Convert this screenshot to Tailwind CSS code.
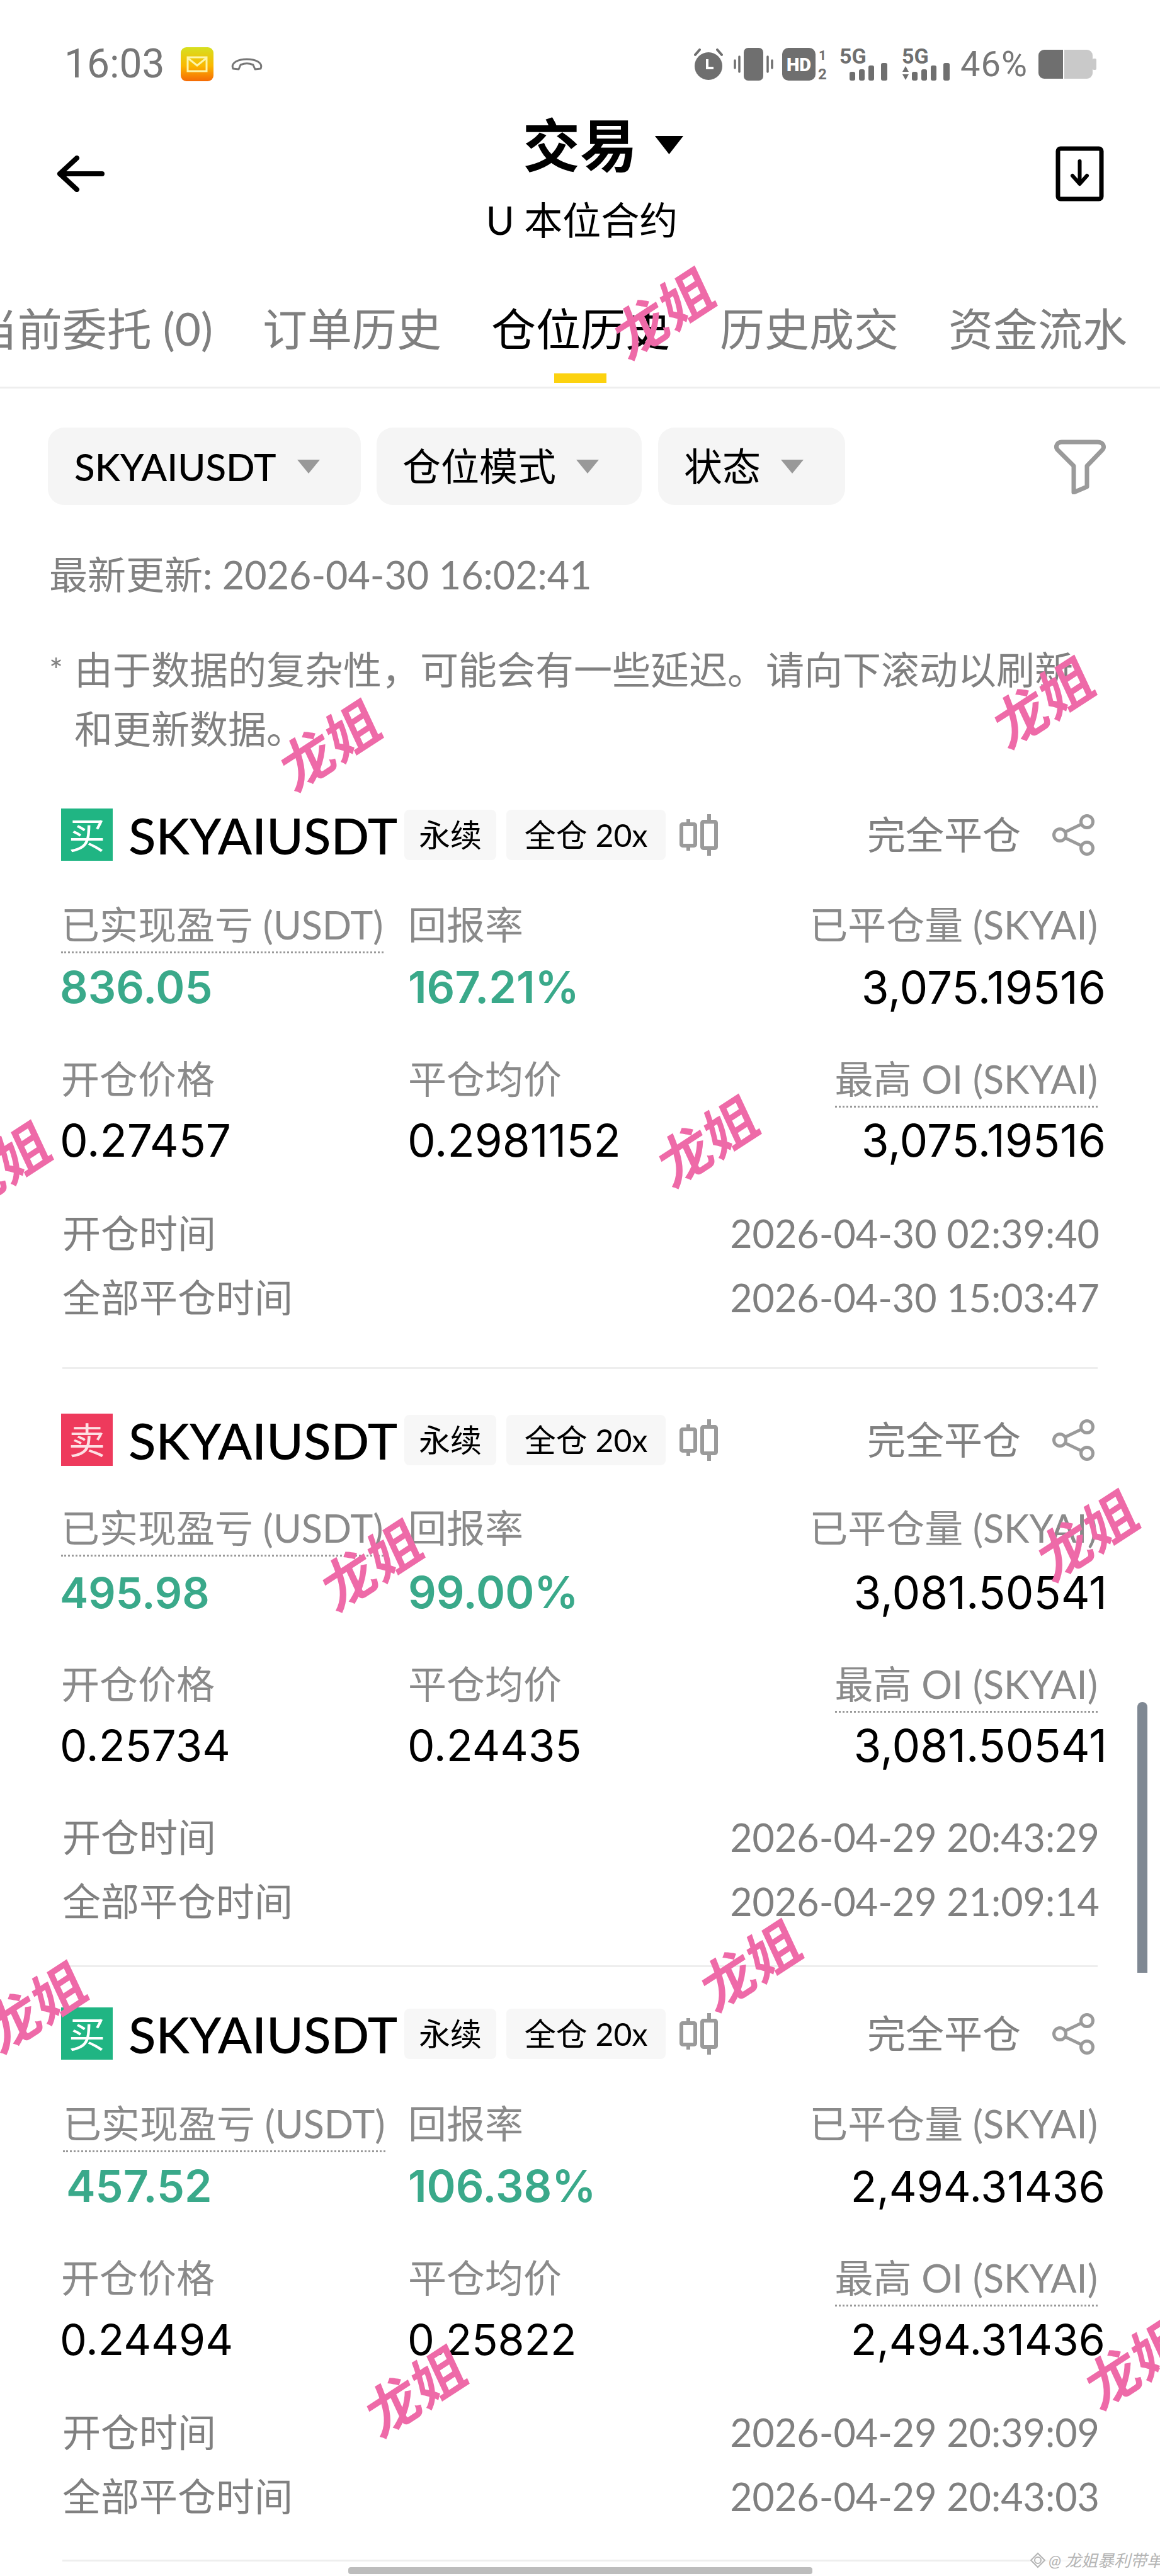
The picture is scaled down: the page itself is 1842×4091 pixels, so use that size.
<!DOCTYPE html>
<html lang="zh-CN">
<head>
    <meta charset="UTF-8">
    <meta name="viewport" content="width=device-width, initial-scale=1.0">
    <title>仓位历史</title>
    <script src="https://cdn.jsdelivr.net/npm/@tailwindcss/browser@4"></script>
</head>
<body class="bg-white">
<div class="relative w-[1842px] h-[4091px] overflow-hidden bg-white text-black font-['Lato','Noto_Sans_CJK_SC',sans-serif]">

    <!-- Status bar -->
    <div class="mt-[72px] h-[60px] flex items-center text-[#777777]">
        <span class="ml-[102px] w-[160px] text-[64px] leading-[60px] font-['Roboto',sans-serif]">16:03</span>
        <svg class="ml-[25px]" width="52" height="54" viewBox="0 0 52 54">
            <defs><linearGradient id="mail" x1="0" y1="0" x2="0" y2="1"><stop offset="0" stop-color="#d6e020"/><stop offset="0.55" stop-color="#fbb800"/><stop offset="1" stop-color="#f56a05"/></linearGradient></defs>
            <rect width="52" height="54" rx="9" fill="url(#mail)"/>
            <rect x="11" y="16" width="30" height="22" fill="none" stroke="#fdf5a8" stroke-width="3"/>
            <path d="M11 17 L26 29 L41 17" fill="none" stroke="#fdf5a8" stroke-width="3"/>
        </svg>
        <svg class="ml-[28px]" width="50" height="22" viewBox="0 0 50 22">
            <path d="M3 18 C-1 8 12 3 25 3 C38 3 51 8 47 18 L38 19 L35 12 C28 9 22 9 15 12 L12 19 Z" fill="none" stroke="#777777" stroke-width="3" stroke-linejoin="round"/>
        </svg>
        <svg class="ml-[684px]" width="48" height="50" viewBox="0 0 48 50">
            <circle cx="24" cy="28" r="22" fill="#6f6f6f"/>
            <path d="M22 17 V31 H32" fill="none" stroke="#fff" stroke-width="4"/>
            <path d="M3 10 L10 2 M45 10 L38 2" stroke="#6f6f6f" stroke-width="4" stroke-linecap="round"/>
        </svg>
        <svg class="ml-[16px]" width="63" height="52" viewBox="0 0 63 52">
            <rect x="16" y="0" width="31" height="52" rx="7" fill="#6f6f6f"/>
            <path d="M9 14 V38 M2 20 V32 M54 14 V38 M61 20 V32" stroke="#6f6f6f" stroke-width="3.5" stroke-linecap="round"/>
        </svg>
        <svg class="ml-[14px] overflow-visible" width="74" height="52" viewBox="0 0 74 52">
            <rect width="53" height="52" rx="10" fill="#6f6f6f"/>
            <text x="26.5" y="37" text-anchor="middle" font-family="Roboto" font-weight="900" font-size="29" fill="#fff">HD</text>
            <text x="64" y="19" text-anchor="middle" font-family="Roboto" font-weight="700" font-size="21" fill="#6f6f6f">1</text>
            <text x="64" y="50" text-anchor="middle" font-family="Roboto" font-weight="700" font-size="24" fill="#6f6f6f">2</text>
        </svg>
        <svg class="ml-[17px] overflow-visible" width="78" height="52" viewBox="0 0 78 52">
            <text x="0" y="25" font-family="Roboto" font-weight="700" font-size="34" fill="#6f6f6f">5G</text>
            <rect x="16" y="38" width="9" height="14" rx="3" fill="#6f6f6f"/>
            <rect x="31" y="34" width="9" height="18" rx="3" fill="#6f6f6f"/>
            <rect x="46" y="28" width="9" height="24" rx="3" fill="#6f6f6f"/>
            <rect x="66" y="24" width="10" height="28" rx="3" fill="#6f6f6f"/>
        </svg>
        <svg class="ml-[21px] overflow-visible" width="78" height="52" viewBox="0 0 78 52">
            <text x="0" y="25" font-family="Roboto" font-weight="700" font-size="34" fill="#6f6f6f">5G</text>
            <path d="M1 38 L6 29 L11 38 Z M1 42 H11 L6 51 Z" fill="#6f6f6f"/>
            <rect x="16" y="38" width="9" height="14" rx="3" fill="#6f6f6f"/>
            <rect x="31" y="34" width="9" height="18" rx="3" fill="#6f6f6f"/>
            <rect x="46" y="28" width="9" height="24" rx="3" fill="#6f6f6f"/>
            <rect x="66" y="24" width="10" height="28" rx="3" fill="#6f6f6f"/>
        </svg>
        <span class="ml-[15px] text-[56px] leading-[60px] font-['Roboto',sans-serif] tracking-[1px]">46%</span>
        <svg class="ml-[17px]" width="92" height="46" viewBox="0 0 92 46">
            <path d="M9 0 H39 V46 H9 A9 9 0 0 1 0 37 V9 A9 9 0 0 1 9 0 Z" fill="#6f6f6f"/>
            <path d="M41 0 H77 A9 9 0 0 1 86 9 V37 A9 9 0 0 1 77 46 H41 Z" fill="#c9c9c9"/>
            <rect x="86" y="14" width="6" height="18" rx="2" fill="#c9c9c9"/>
        </svg>
    </div>

    <!-- Title -->
    <div class="mt-[43px] grid grid-cols-[1fr_auto_1fr]">
        <svg class="ml-[90px] mt-[72px]" width="76" height="58" viewBox="0 0 76 58">
            <path d="M32 4 L5 29 L32 54 M5 29 H72" fill="none" stroke="#000" stroke-width="8" stroke-linecap="round" stroke-linejoin="round"/>
        </svg>
        <div class="flex flex-col items-center">
            <div class="relative h-[110px] text-[91px] leading-[110px] font-bold">
                交易
                <svg class="absolute left-[210px] top-[41px]" width="45" height="29" viewBox="0 0 45 29"><path d="M0 0 H45 L22.5 29 Z" fill="#000"/></svg>
            </div>
            <div class="mt-[25px] h-[80px] text-[61px] leading-[80px] ml-[6px]">U 本位合约</div>
        </div>
        <svg class="ml-auto mr-[89px] mt-[57px]" width="77" height="88" viewBox="0 0 77 88">
            <rect x="4" y="4" width="69" height="80" rx="4" fill="none" stroke="#000" stroke-width="7"/>
            <path d="M38.5 24 V58 M27 47 L38.5 60 L50 47" fill="none" stroke="#000" stroke-width="6" stroke-linecap="round" stroke-linejoin="round"/>
        </svg>
    </div>

    <!-- Tabs -->
    <div class="mt-[87px] h-[140px] border-b-[3px] border-[#eeeeee] flex justify-end gap-[79px] pr-[52px] text-[71px] leading-[90px] text-[#7f7f7f] whitespace-nowrap overflow-hidden">
        <span class="shrink-0">当前委托 (0)</span>
        <span class="shrink-0">订单历史</span>
        <span class="relative shrink-0 h-[134px] text-black">仓位历史<span class="absolute left-[100px] bottom-[3px] w-[83px] h-[15px] bg-[#fcd20f]"></span></span>
        <span class="shrink-0">历史成交</span>
        <span class="shrink-0">资金流水</span>
    </div>

    <!-- Filters -->
    <div class="mt-[62px] ml-[76px] flex items-center">
        <div class="w-[497px] h-[123px] rounded-[26px] bg-[#f5f5f5] flex items-center pl-[42px] text-[60px] font-medium">
            <span class="w-[320px]">SKYAIUSDT</span>
            <svg class="ml-[34px]" width="36" height="22" viewBox="0 0 36 22"><path d="M0 0 H36 L18 22 Z" fill="#999999"/></svg>
        </div>
        <div class="ml-[25px] w-[421px] h-[123px] rounded-[26px] bg-[#f5f5f5] flex items-center pl-[41px]">
            <span class="text-[61px]">仓位模式</span>
            <svg class="ml-[32px]" width="36" height="22" viewBox="0 0 36 22"><path d="M0 0 H36 L18 22 Z" fill="#999999"/></svg>
        </div>
        <div class="ml-[26px] w-[297px] h-[123px] rounded-[26px] bg-[#f5f5f5] flex items-center pl-[41px]">
            <span class="text-[61px]">状态</span>
            <svg class="ml-[32px]" width="36" height="22" viewBox="0 0 36 22"><path d="M0 0 H36 L18 22 Z" fill="#999999"/></svg>
        </div>
        <svg class="ml-[331px]" width="84" height="88" viewBox="0 0 84 88">
            <path d="M13 5 H70 C79 5 82 13 77 18 L53 43 V76 L32 85 V43 L7 18 C2 13 5 5 13 5 Z" fill="none" stroke="#9a9a9a" stroke-width="7" stroke-linejoin="round"/>
        </svg>
    </div>

    <!-- Notes -->
    <div class="mt-[71px] ml-[78px] h-[80px] text-[61px] leading-[80px] text-[#808080]">最新更新: 2026-04-30 16:02:41</div>
    <div class="mt-[64px] ml-[78px] text-[61px] leading-[94px] text-[#808080] flex">
        <span class="w-[40px] text-[52px]">*</span>
        <p>由于数据的复杂性，可能会有一些延迟。请向下滚动以刷新<br>和更新数据。</p>
    </div>

    <!-- Card 1 -->
    <section class="mt-[79px] mx-[99px]">
        <div class="h-[83px] flex items-center">
            <span class="-ml-[2px] w-[82px] h-[83px] bg-[#20b583] text-white text-[58px] leading-[83px] text-center shrink-0">买</span>
            <span class="ml-[25px] w-[422px] text-[80px] font-medium whitespace-nowrap">SKYAIUSDT</span>
            <span class="ml-[16px] w-[146px] h-[80px] rounded-[8px] bg-[#f7f7f7] text-[50px] leading-[80px] text-center">永续</span>
            <span class="ml-[16px] w-[253px] h-[80px] rounded-[8px] bg-[#f7f7f7] text-[50px] leading-[80px] text-center">全仓 20x</span>
            <svg class="ml-[22px]" width="62" height="66" viewBox="0 0 62 66"><path d="M14 8 V58 M47 0 V66" stroke="#9a9a9a" stroke-width="6"/><rect x="3" y="16" width="22" height="34" rx="2" fill="#fff" stroke="#9a9a9a" stroke-width="6"/><rect x="36" y="12" width="22" height="42" rx="2" fill="#fff" stroke="#9a9a9a" stroke-width="6"/></svg>
            <span class="ml-auto text-[61px] text-[#808080]">完全平仓</span>
            <svg class="ml-[50px] mr-[4px] shrink-0" width="68" height="66" viewBox="0 0 68 66"><circle cx="12" cy="33" r="9.5" fill="none" stroke="#9a9a9a" stroke-width="5"/><circle cx="55" cy="12" r="9.5" fill="none" stroke="#9a9a9a" stroke-width="5"/><circle cx="55" cy="54" r="9.5" fill="none" stroke="#9a9a9a" stroke-width="5"/><path d="M21 28 L46 16 M21 38 L46 50" stroke="#9a9a9a" stroke-width="5"/></svg>
        </div>
        <div class="mt-[67px] grid grid-cols-[549px_1fr_auto] text-[61px] leading-[70px] text-[#8a8a8a]">
            <span><span class="inline-block -ml-[2px] h-[80px] border-b-[3px] border-dotted border-[#999999]">已实现盈亏 (USDT)</span></span>
            <span>回报率</span>
            <span class="text-right">已平仓量 (SKYAI)</span>
        </div>
        <div class="mt-[14px] grid grid-cols-[549px_1fr_auto] h-[80px] text-[71px] leading-[80px] font-['Inter',sans-serif]">
            <span class="-ml-[4px] text-[70px] font-semibold text-[#3aa98a]">836.05</span>
            <span class="text-[70px] font-semibold text-[#3aa98a]">167.21%</span>
            <span class="text-right -mr-[13px]">3,075.19516</span>
        </div>
        <div class="mt-[71px] grid grid-cols-[549px_1fr_auto] text-[61px] leading-[70px] text-[#8a8a8a]">
            <span class="-ml-[2px]">开仓价格</span>
            <span>平仓均价</span>
            <span class="text-right"><span class="inline-block h-[80px] border-b-[3px] border-dotted border-[#999999]">最高 OI (SKYAI)</span></span>
        </div>
        <div class="mt-[12px] grid grid-cols-[549px_1fr_auto] h-[80px] text-[71px] leading-[80px] font-['Inter',sans-serif]">
            <span class="-ml-[4px]">0.27457</span>
            <span class="-ml-[1px]">0.2981152</span>
            <span class="text-right -mr-[13px]">3,075.19516</span>
        </div>
        <div class="mt-[73px] flex justify-between text-[61px] leading-[70px] text-[#808080]">
            <span>开仓时间</span>
            <span class="-mr-[3px]">2026-04-30 02:39:40</span>
        </div>
        <div class="mt-[32px] flex justify-between text-[61px] leading-[70px] text-[#808080]">
            <span>全部平仓时间</span>
            <span class="-mr-[3px]">2026-04-30 15:03:47</span>
        </div>
        <div class="mt-[75px] h-[3px] bg-[#eeeeee]"></div>
    </section>

    <!-- Card 2 -->
    <section class="mt-[71px] mx-[99px]">
        <div class="h-[83px] flex items-center">
            <span class="-ml-[2px] w-[82px] h-[83px] bg-[#ee3a5c] text-[#fde0e4] text-[58px] leading-[83px] text-center shrink-0">卖</span>
            <span class="ml-[25px] w-[422px] text-[80px] font-medium whitespace-nowrap">SKYAIUSDT</span>
            <span class="ml-[16px] w-[146px] h-[80px] rounded-[8px] bg-[#f7f7f7] text-[50px] leading-[80px] text-center">永续</span>
            <span class="ml-[16px] w-[253px] h-[80px] rounded-[8px] bg-[#f7f7f7] text-[50px] leading-[80px] text-center">全仓 20x</span>
            <svg class="ml-[22px]" width="62" height="66" viewBox="0 0 62 66"><path d="M14 8 V58 M47 0 V66" stroke="#9a9a9a" stroke-width="6"/><rect x="3" y="16" width="22" height="34" rx="2" fill="#fff" stroke="#9a9a9a" stroke-width="6"/><rect x="36" y="12" width="22" height="42" rx="2" fill="#fff" stroke="#9a9a9a" stroke-width="6"/></svg>
            <span class="ml-auto text-[61px] text-[#808080]">完全平仓</span>
            <svg class="ml-[50px] mr-[4px] shrink-0" width="68" height="66" viewBox="0 0 68 66"><circle cx="12" cy="33" r="9.5" fill="none" stroke="#9a9a9a" stroke-width="5"/><circle cx="55" cy="12" r="9.5" fill="none" stroke="#9a9a9a" stroke-width="5"/><circle cx="55" cy="54" r="9.5" fill="none" stroke="#9a9a9a" stroke-width="5"/><path d="M21 28 L46 16 M21 38 L46 50" stroke="#9a9a9a" stroke-width="5"/></svg>
        </div>
        <div class="mt-[64px] grid grid-cols-[549px_1fr_auto] text-[61px] leading-[70px] text-[#8a8a8a]">
            <span><span class="inline-block -ml-[2px] h-[80px] border-b-[3px] border-dotted border-[#999999]">已实现盈亏 (USDT)</span></span>
            <span>回报率</span>
            <span class="text-right">已平仓量 (SKYAI)</span>
        </div>
        <div class="mt-[17px] grid grid-cols-[549px_1fr_auto] h-[80px] text-[71px] leading-[80px] font-['Inter',sans-serif]">
            <span class="-ml-[4px] text-[68px] font-semibold text-[#3aa98a]">495.98</span>
            <span class="text-[70px] font-semibold text-[#3aa98a]">99.00%</span>
            <span class="text-right -mr-[15px]">3,081.50541</span>
        </div>
        <div class="mt-[71px] grid grid-cols-[549px_1fr_auto] text-[61px] leading-[70px] text-[#8a8a8a]">
            <span class="-ml-[2px]">开仓价格</span>
            <span>平仓均价</span>
            <span class="text-right"><span class="inline-block h-[80px] border-b-[3px] border-dotted border-[#999999]">最高 OI (SKYAI)</span></span>
        </div>
        <div class="mt-[12px] grid grid-cols-[549px_1fr_auto] h-[80px] text-[69px] leading-[80px] font-['Inter',sans-serif]">
            <span class="-ml-[4px]">0.25734</span>
            <span class="-ml-[1px]">0.24435</span>
            <span class="text-right -mr-[15px] text-[71px]">3,081.50541</span>
        </div>
        <div class="mt-[71px] flex justify-between text-[61px] leading-[70px] text-[#808080]">
            <span>开仓时间</span>
            <span class="-mr-[3px]">2026-04-29 20:43:29</span>
        </div>
        <div class="mt-[32px] flex justify-between text-[61px] leading-[70px] text-[#808080]">
            <span>全部平仓时间</span>
            <span class="-mr-[3px]">2026-04-29 21:09:14</span>
        </div>
        <div class="mt-[66px] h-[3px] bg-[#eeeeee]"></div>
    </section>

    <!-- Card 3 -->
    <section class="mt-[64px] mx-[99px]">
        <div class="h-[83px] flex items-center">
            <span class="-ml-[2px] w-[82px] h-[83px] bg-[#20b583] text-white text-[58px] leading-[83px] text-center shrink-0">买</span>
            <span class="ml-[25px] w-[422px] text-[80px] font-medium whitespace-nowrap">SKYAIUSDT</span>
            <span class="ml-[16px] w-[146px] h-[80px] rounded-[8px] bg-[#f7f7f7] text-[50px] leading-[80px] text-center">永续</span>
            <span class="ml-[16px] w-[253px] h-[80px] rounded-[8px] bg-[#f7f7f7] text-[50px] leading-[80px] text-center">全仓 20x</span>
            <svg class="ml-[22px]" width="62" height="66" viewBox="0 0 62 66"><path d="M14 8 V58 M47 0 V66" stroke="#9a9a9a" stroke-width="6"/><rect x="3" y="16" width="22" height="34" rx="2" fill="#fff" stroke="#9a9a9a" stroke-width="6"/><rect x="36" y="12" width="22" height="42" rx="2" fill="#fff" stroke="#9a9a9a" stroke-width="6"/></svg>
            <span class="ml-auto text-[61px] text-[#808080]">完全平仓</span>
            <svg class="ml-[50px] mr-[4px] shrink-0" width="68" height="66" viewBox="0 0 68 66"><circle cx="12" cy="33" r="9.5" fill="none" stroke="#9a9a9a" stroke-width="5"/><circle cx="55" cy="12" r="9.5" fill="none" stroke="#9a9a9a" stroke-width="5"/><circle cx="55" cy="54" r="9.5" fill="none" stroke="#9a9a9a" stroke-width="5"/><path d="M21 28 L46 16 M21 38 L46 50" stroke="#9a9a9a" stroke-width="5"/></svg>
        </div>
        <div class="mt-[67px] grid grid-cols-[549px_1fr_auto] text-[61px] leading-[70px] text-[#8a8a8a]">
            <span><span class="inline-block h-[80px] ml-[1px] border-b-[3px] border-dotted border-[#999999]">已实现盈亏 (USDT)</span></span>
            <span>回报率</span>
            <span class="text-right">已平仓量 (SKYAI)</span>
        </div>
        <div class="mt-[14px] grid grid-cols-[549px_1fr_auto] h-[80px] text-[68px] leading-[80px] font-['Inter',sans-serif]">
            <span class="ml-[6px] text-[70px] font-semibold text-[#3aa98a]">457.52</span>
            <span class="text-[70px] font-semibold text-[#3aa98a]">106.38%</span>
            <span class="text-right -mr-[12px]">2,494.31436</span>
        </div>
        <div class="mt-[71px] grid grid-cols-[549px_1fr_auto] text-[61px] leading-[70px] text-[#8a8a8a]">
            <span class="-ml-[2px]">开仓价格</span>
            <span>平仓均价</span>
            <span class="text-right"><span class="inline-block h-[80px] border-b-[3px] border-dotted border-[#999999]">最高 OI (SKYAI)</span></span>
        </div>
        <div class="mt-[12px] grid grid-cols-[549px_1fr_auto] h-[80px] text-[68px] leading-[80px] font-['Inter',sans-serif]">
            <span class="-ml-[4px]">0.24494</span>
            <span class="-ml-[1px]">0.25822</span>
            <span class="text-right -mr-[12px]">2,494.31436</span>
        </div>
        <div class="mt-[73px] flex justify-between text-[61px] leading-[70px] text-[#808080]">
            <span>开仓时间</span>
            <span class="-mr-[3px]">2026-04-29 20:39:09</span>
        </div>
        <div class="mt-[32px] flex justify-between text-[61px] leading-[70px] text-[#808080]">
            <span>全部平仓时间</span>
            <span class="-mr-[3px]">2026-04-29 20:43:03</span>
        </div>
        <div class="mt-[65px] h-[3px] bg-[#eeeeee]"></div>
    </section>

    <!-- Scrollbars -->
    <div class="absolute left-[1806px] top-[2703px] w-[16px] h-[430px] rounded-t-full bg-[#7f8893]"></div>
    <div class="absolute left-[553px] top-[4077px] w-[737px] h-[11px] rounded-[4px] bg-[#bdbdbd]"></div>

    <!-- Corner mark -->
    <div class="absolute left-[1635px] top-[4052px] flex items-center gap-[4px] bg-white/60 text-[#b5b5b5] text-[26px] leading-[28px] italic whitespace-nowrap">
        <svg width="26" height="26" viewBox="0 0 26 26"><circle cx="13" cy="13" r="5" fill="none" stroke="#b5b5b5" stroke-width="2"/><path d="M13 2 L24 13 L13 24 L2 13 Z" fill="none" stroke="#b5b5b5" stroke-width="2"/></svg>
        <span>@ 龙姐暴利带单</span>
    </div>

    <!-- Pink stamps -->
    <span class="absolute left-[968px] top-[453px] text-[86px] leading-[86px] font-bold whitespace-nowrap text-[#ee6aa8] -rotate-[33deg] -skew-x-[8deg]">龙姐</span>
    <span class="absolute left-[438px] top-[1139px] text-[86px] leading-[86px] font-bold whitespace-nowrap text-[#ee6aa8] -rotate-[33deg] -skew-x-[8deg]">龙姐</span>
    <span class="absolute left-[1571px] top-[1071px] text-[86px] leading-[86px] font-bold whitespace-nowrap text-[#ee6aa8] -rotate-[33deg] -skew-x-[8deg]">龙姐</span>
    <span class="absolute left-[1038px] top-[1768px] text-[86px] leading-[86px] font-bold whitespace-nowrap text-[#ee6aa8] -rotate-[33deg] -skew-x-[8deg]">龙姐</span>
    <span class="absolute -left-[86px] top-[1809px] text-[86px] leading-[86px] font-bold whitespace-nowrap text-[#ee6aa8] -rotate-[33deg] -skew-x-[8deg]">龙姐</span>
    <span class="absolute left-[1641px] top-[2394px] text-[86px] leading-[86px] font-bold whitespace-nowrap text-[#ee6aa8] -rotate-[33deg] -skew-x-[8deg]">龙姐</span>
    <span class="absolute left-[504px] top-[2441px] text-[86px] leading-[86px] font-bold whitespace-nowrap text-[#ee6aa8] -rotate-[33deg] -skew-x-[8deg]">龙姐</span>
    <span class="absolute left-[1106px] top-[3077px] text-[86px] leading-[86px] font-bold whitespace-nowrap text-[#ee6aa8] -rotate-[33deg] -skew-x-[8deg]">龙姐</span>
    <span class="absolute -left-[29px] top-[3143px] text-[86px] leading-[86px] font-bold whitespace-nowrap text-[#ee6aa8] -rotate-[33deg] -skew-x-[8deg]">龙姐</span>
    <span class="absolute left-[574px] top-[3753px] text-[86px] leading-[86px] font-bold whitespace-nowrap text-[#ee6aa8] -rotate-[33deg] -skew-x-[8deg]">龙姐</span>
    <span class="absolute left-[1717px] top-[3709px] text-[86px] leading-[86px] font-bold whitespace-nowrap text-[#ee6aa8] -rotate-[33deg] -skew-x-[8deg]">龙姐</span>
</div>
</body>
</html>
